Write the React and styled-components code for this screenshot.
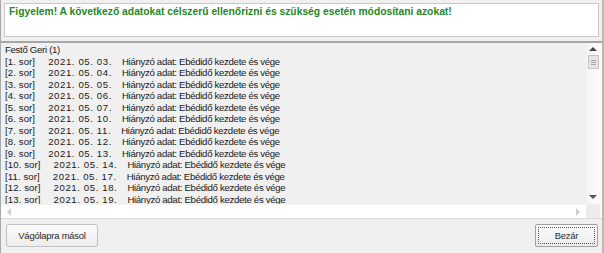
import React from "react";
import styled, { createGlobalStyle } from "styled-components";

const Global = createGlobalStyle`
  html, body { margin: 0; padding: 0; background: #f0f0f0; }
  body { font-family: "Liberation Sans", Arial, sans-serif; }
`;

const Window = styled.div`
  width: 604px;
  height: 253px;
  box-sizing: border-box;
  background: #f0f0f0;
  border-left: 1px solid #a9a9a9;
  border-right: 2px solid #b8b8b8;
  display: flex;
  flex-direction: column;
`;

const MessageBox = styled.div`
  margin: 3px 3px 0 3px;
  height: 34px;
  box-sizing: border-box;
  background: #ffffff;
  border: 1px solid #c9c9c9;
  padding: 2px 0 0 4px;
  color: #25891f;
  font-weight: bold;
  font-size: 10.3px;
  line-height: 12px;
`;

const ListPanel = styled.div`
  margin-top: 4px;
  height: 178px;
  box-sizing: border-box;
  border-top: 2px solid #a5a5a5;
  border-bottom: 1px solid #d8d8d8;
  display: grid;
  grid-template-columns: 1fr 14px 2px;
  grid-template-rows: 1fr 14px;
  background: #f0f0f0;
`;

const ListText = styled.div`
  padding: 1px 0 0 4px;
  font-size: 9.6px;
  letter-spacing: -0.3px;
  line-height: 11.5px;
  color: #1a1a1a;
  white-space: pre;
  overflow: hidden;
`;

const Line = styled.div`
  display: flex;
`;

const Label = styled.span`
  letter-spacing: 0.1px;
`;

const DateCell = styled.span`
  margin-left: 13px;
  letter-spacing: 0.6px;
`;

const Note = styled.span`
  margin-left: 10px;
`;

const VScroll = styled.div`
  background: linear-gradient(to right, #f4f4f4, #fdfdfd);
  display: flex;
  flex-direction: column;
  align-items: center;
  padding-top: 4px;
`;

const Arrow = styled.div`
  width: 0;
  height: 0;
  border-left: 4px solid transparent;
  border-right: 4px solid transparent;
  ${(p) =>
    p.$dir === "up"
      ? "border-bottom: 4px solid #444;"
      : "border-top: 4px solid #555;"}
`;

const HArrow = styled.div`
  width: 0;
  height: 0;
  border-top: 4px solid transparent;
  border-bottom: 4px solid transparent;
  ${(p) =>
    p.$dir === "left"
      ? "border-right: 4px solid #cfcfcf;"
      : "border-left: 4px solid #cfcfcf;"}
`;

const Thumb = styled.div`
  margin-top: 4px;
  width: 11px;
  height: 14px;
  box-sizing: border-box;
  border: 1px solid #c4c4c4;
  background: #e6e6e6;
  display: flex;
  align-items: center;
  justify-content: center;
  &::after {
    content: "";
    width: 5px;
    height: 5px;
    box-sizing: border-box;
    background: repeating-linear-gradient(#a8a8a8 0 1px, transparent 1px 2px);
  }
`;

const Spacer = styled.div`
  flex: 1;
`;

const BottomGap = styled.div`
  height: 5px;
`;

const EdgeCol = styled.div`
  grid-row: 1 / span 2;
  grid-column: 3;
  background: #fbfbfb;
`;

const HScroll = styled.div`
  background: #ffffff;
  border-top: 1px solid #f4f4f4;
  display: flex;
  align-items: center;
  justify-content: space-between;
  padding: 0 6px 0 6px;
`;

const Corner = styled.div`
  background: #ececec;
`;

const Footer = styled.div`
  flex: 1;
  display: flex;
  align-items: flex-start;
  justify-content: space-between;
  padding: 5px 4px 0 5px;
`;

const Button = styled.button`
  height: 23px;
  width: ${(p) => p.$w}px;
  box-sizing: border-box;
  margin: 0;
  padding: 0;
  border: 1px solid #c2c2c2;
  border-radius: 2px;
  background: linear-gradient(#fbfbfb, #ececec);
  font-family: "Liberation Sans", Arial, sans-serif;
  font-size: 9.4px;
  letter-spacing: -0.2px;
  color: #2a2a2a;
  display: flex;
  align-items: center;
  justify-content: center;
  position: relative;
  ${(p) =>
    p.$focused &&
    `
    border-color: #a0a0a0;
    &::after {
      content: "";
      position: absolute;
      inset: 2px;
      border: 1px dotted #555;
    }
  `}
`;

const dates = [
  "03", "04", "05", "06", "07", "10", "11", "12", "13", "14", "17", "18", "19",
];

export default function App() {
  return (
    <>
      <Global />
      <Window>
        <MessageBox>
          Figyelem! A következő adatokat célszerű ellenőrizni és szükség esetén módosítani azokat!
        </MessageBox>
        <ListPanel>
          <ListText>
            <Line>Festő Geri (1)</Line>
            {dates.map((d, i) => (
              <Line key={d}>
                <Label>{`[${i + 1}. sor]`}</Label>
                <DateCell>{`2021. 05. ${d}.`}</DateCell>
                <Note>Hiányzó adat: Ebédidő kezdete és vége</Note>
              </Line>
            ))}
          </ListText>
          <VScroll>
            <Arrow $dir="up" />
            <Thumb />
            <Spacer />
            <Arrow $dir="down" />
            <BottomGap />
          </VScroll>
          <EdgeCol />
          <HScroll>
            <HArrow $dir="left" />
            <HArrow $dir="right" />
          </HScroll>
          <Corner />
        </ListPanel>
        <Footer>
          <Button $w={92}>Vágólapra másol</Button>
          <Button $w={63} $focused>
            Bezár
          </Button>
        </Footer>
      </Window>
    </>
  );
}
